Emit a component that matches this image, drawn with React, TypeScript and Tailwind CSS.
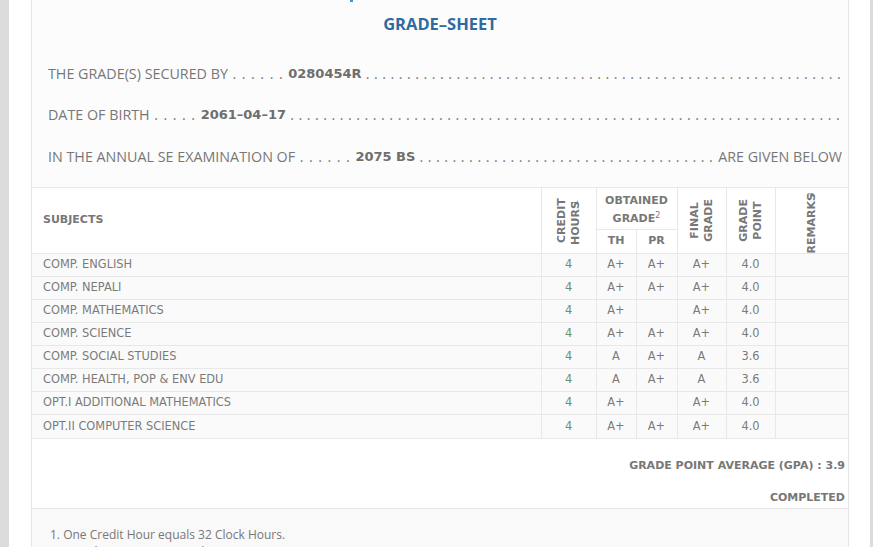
import React from 'react';

const SUBJECTS = [
  { name: 'COMP. ENGLISH', th: 'A+', pr: 'A+', fg: 'A+', gp: '4.0' },
  { name: 'COMP. NEPALI', th: 'A+', pr: 'A+', fg: 'A+', gp: '4.0' },
  { name: 'COMP. MATHEMATICS', th: 'A+', pr: '', fg: 'A+', gp: '4.0' },
  { name: 'COMP. SCIENCE', th: 'A+', pr: 'A+', fg: 'A+', gp: '4.0' },
  { name: 'COMP. SOCIAL STUDIES', th: 'A', pr: 'A+', fg: 'A', gp: '3.6' },
  { name: 'COMP. HEALTH, POP & ENV EDU', th: 'A', pr: 'A+', fg: 'A', gp: '3.6' },
  { name: 'OPT.I ADDITIONAL MATHEMATICS', th: 'A+', pr: '', fg: 'A+', gp: '4.0' },
  { name: 'OPT.II COMPUTER SCIENCE', th: 'A+', pr: 'A+', fg: 'A+', gp: '4.0' },
];

const FILL = '. '.repeat(110);

const InfoLine: React.FC<{ label: string; lead: string; value: string; tail?: string; className?: string }> = ({ label, lead, value, tail, className }) => (
  <div className={`flex h-[20px] leading-[20px] whitespace-nowrap text-[14.3px] text-[#777] ${className ?? ''}`}>
    <span>{label}</span>
    <span className="tracking-[0.9px]">&nbsp;{lead}&nbsp;</span>
    <span className="font-['DejaVu_Sans',sans-serif] text-[13px] font-bold text-[#6e6e6e]">{value}</span>
    <span className="min-w-0 flex-1 overflow-hidden tracking-[0.4px]">&nbsp;{FILL}</span>
    {tail && <span>&nbsp;{tail}</span>}
  </div>
);

const VText: React.FC<{ children: React.ReactNode }> = ({ children }) => (
  <div className="flex h-[64px] items-center justify-center">
    <div className="[writing-mode:vertical-rl] rotate-180 leading-[14px] text-center">{children}</div>
  </div>
);

const App: React.FC = () => {
  return (
    <div className="flex h-[547px] overflow-hidden bg-white font-['DejaVu_Sans',sans-serif]">
      <div className="w-[9px] shrink-0 bg-[#dcdcdc]" />
      <div className="ml-[22px] w-[818px] shrink-0 border-x border-[#e6e6e6]">
        {/* heading block */}
        <div className="h-[187px] bg-[#fcfcfc] font-['Open_Sans',sans-serif]">
          <div className="ml-[318px] h-[2px] w-[3px] bg-[#2aa0d8]" />
          <h1 className="mt-[11px] text-center text-[16.5px] leading-[22px] font-bold text-[#2f6aa0]">GRADE–SHEET</h1>
          <div className="pl-[16px] pr-[6px]">
            <InfoLine className="mt-[29px]" label="THE GRADE(S) SECURED BY" lead=". . . . . ." value="0280454R" />
            <InfoLine className="mt-[21px]" label="DATE OF BIRTH" lead=". . . . ." value="2061–04–17" />
            <InfoLine className="mt-[22px]" label="IN THE ANNUAL SE EXAMINATION OF" lead=". . . . . ." value="2075 BS" tail="ARE GIVEN BELOW" />
          </div>
        </div>

        <table className="w-full table-fixed border-collapse text-[11px] text-[#7a7a7a]">
          <colgroup>
            <col className="w-[509px]" />
            <col className="w-[55px]" />
            <col className="w-[40px]" />
            <col className="w-[41px]" />
            <col className="w-[49px]" />
            <col className="w-[49px]" />
            <col />
          </colgroup>
          <thead className="bg-white font-bold text-[#777]">
            <tr className="h-[42px] border-t border-[#e8e8e8]">
              <th rowSpan={2} className="pl-[11px] text-left align-middle">SUBJECTS</th>
              <th rowSpan={2} className="border-l border-[#e8e8e8] p-0">
                <VText>CREDIT<br />HOURS<sup className="text-[8px] font-normal">1</sup></VText>
              </th>
              <th colSpan={2} className="border-l border-b border-[#e8e8e8] leading-[18px] pt-[2px]">
                OBTAINED<br />GRADE<sup className="text-[8px] font-normal">2</sup>
              </th>
              <th rowSpan={2} className="border-l border-[#e8e8e8] p-0">
                <VText>FINAL<br />GRADE</VText>
              </th>
              <th rowSpan={2} className="border-l border-[#e8e8e8] p-0">
                <VText>GRADE<br />POINT</VText>
              </th>
              <th rowSpan={2} className="border-l border-[#e8e8e8] p-0">
                <VText>REMARKS<sup className="text-[8px] font-normal">3</sup></VText>
              </th>
            </tr>
            <tr className="h-[24px]">
              <th className="border-l border-[#e8e8e8]">TH</th>
              <th className="border-l border-[#e8e8e8]">PR</th>
            </tr>
          </thead>
          <tbody className="text-[11.4px]">
            {SUBJECTS.map((s) => (
              <tr key={s.name} className="h-[23px] border-t border-[#e8e8e8] bg-[#fafafa]">
                <td className="pl-[11px] whitespace-nowrap">{s.name}</td>
                <td className="border-l border-[#e8e8e8] text-center text-[#6c8f6c]">4</td>
                <td className="border-l border-[#e8e8e8] text-center">{s.th}</td>
                <td className="border-l border-[#e8e8e8] text-center">{s.pr}</td>
                <td className="border-l border-[#e8e8e8] text-center">{s.fg}</td>
                <td className="border-l border-[#e8e8e8] text-center">{s.gp}</td>
                <td className="border-l border-[#e8e8e8]" />
              </tr>
            ))}
          </tbody>
        </table>

        {/* GPA block */}
        <div className="h-[71px] border-t border-b border-[#e8e8e8] bg-white pr-[3px] text-right text-[11px] font-bold text-[#777]">
          <div className="pt-[19px] leading-[16px]">GRADE POINT AVERAGE (GPA) : 3.9</div>
          <div className="mt-[16px] leading-[16px]">COMPLETED</div>
        </div>

        {/* notes */}
        <div className="bg-[#f9f9f9] pl-[18px] pt-[17px] font-['Open_Sans',sans-serif] text-[12px] leading-[17px] text-[#777]">
          <div>1. One Credit Hour equals 32 Clock Hours.</div>
          <div>2. TH : Theory, PR : Practical</div>
        </div>
      </div>
      <div className="ml-auto w-[3px] shrink-0 bg-[#dcdcdc]" />
    </div>
  );
};

export default App;
